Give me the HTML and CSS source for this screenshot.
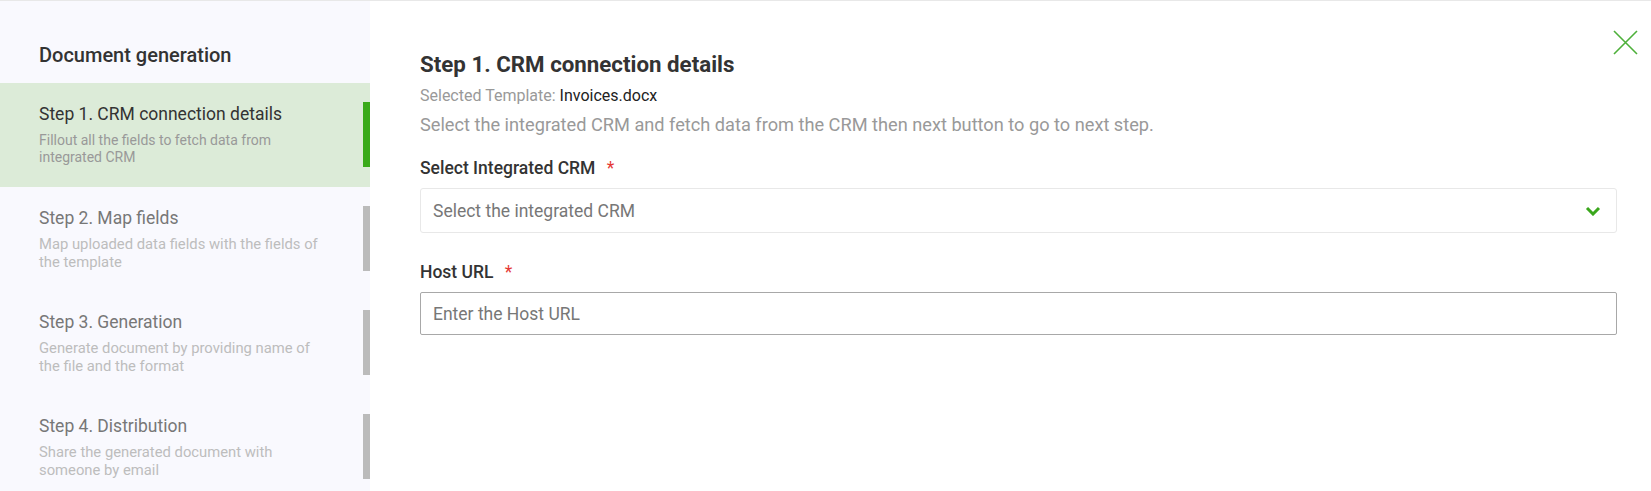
FILE: index.html
```html
<!DOCTYPE html>
<html lang="en">
<head>
<meta charset="utf-8">
<title>Document generation</title>
<link rel="stylesheet" href="styles.css">
</head>
<body>
<div class="page">
  <aside class="sidebar">
    <h2 class="side-title">Document generation</h2>
    <ul class="steps">
      <li class="step active">
        <div class="step-title">Step 1. CRM connection details</div>
        <div class="step-desc">Fillout all the fields to fetch data from integrated CRM</div>
        <span class="step-bar"></span>
      </li>
      <li class="step">
        <div class="step-title">Step 2. Map fields</div>
        <div class="step-desc">Map uploaded data fields with the fields of the template</div>
        <span class="step-bar"></span>
      </li>
      <li class="step">
        <div class="step-title">Step 3. Generation</div>
        <div class="step-desc">Generate document by providing name of the file and the format</div>
        <span class="step-bar"></span>
      </li>
      <li class="step">
        <div class="step-title">Step 4. Distribution</div>
        <div class="step-desc">Share the generated document with someone by email</div>
        <span class="step-bar"></span>
      </li>
    </ul>
  </aside>
  <main class="main">
    <button class="close" aria-label="Close">
      <svg width="25" height="25" viewBox="0 0 25 25"><path d="M1 1 L24 24 M24 1 L1 24" stroke="#4db03a" stroke-width="1.6" fill="none"/></svg>
    </button>
    <h1 class="main-title">Step 1. CRM connection details</h1>
    <div class="template">Selected Template: <span class="template-name">Invoices.docx</span></div>
    <p class="intro">Select the integrated CRM and fetch data from the CRM then next button to go to next step.</p>
    <label class="field-label">Select Integrated CRM <span class="req">*</span></label>
    <div class="select">
      <span class="placeholder">Select the integrated CRM</span>
      <svg class="chevron" width="16" height="10" viewBox="0 0 16 10"><path d="M2 2 L8 8 L14 2" stroke="#3aa71c" stroke-width="3" fill="none"/></svg>
    </div>
    <label class="field-label host-label">Host URL <span class="req">*</span></label>
    <div class="input"><span class="placeholder">Enter the Host URL</span></div>
  </main>
</div>
</body>
</html>
```

FILE: styles.css
```css
* { box-sizing: border-box; }
html, body { margin: 0; padding: 0; }
body {
  font-family: Roboto, "Liberation Sans", Arial, sans-serif;
  background: #fff;
  height: 491px;
  overflow: hidden;
}
.page {
  display: flex;
  height: 491px;
  border-top: 1px solid #e8e8e8;
}
.sidebar {
  width: 370px;
  flex: none;
  background: #f9f9fe;
  padding-top: 42px;
}
.side-title {
  margin: 0 0 16px 39px;
  font-size: 20px;
  line-height: 24px;
  font-weight: 500;
  color: #333;
}
.steps { list-style: none; margin: 0; padding: 0; }
.step {
  position: relative;
  height: 104px;
  padding: 20px 44px 0 39px;
}
.step.active { background: #dcebd8; }
.step-title {
  font-size: 17.5px;
  line-height: 22px;
  color: #777;
}
.step.active .step-title { color: #333; }
.step-desc {
  margin-top: 6px;
  font-size: 14.8px;
  line-height: 18px;
  color: #bdbdbd;
}
.step.active .step-desc {
  margin-top: 7px;
  font-size: 14px;
  line-height: 17px;
  color: #999;
}
.step-bar {
  position: absolute;
  right: 0;
  top: 19px;
  width: 7px;
  height: 65px;
  background: #bbbbbb;
}
.step.active .step-bar { background: #3aaa1a; }
.main {
  position: relative;
  flex: 1;
  padding: 50px 34px 0 50px;
}
.close {
  position: absolute;
  top: 29px;
  right: 13px;
  width: 25px;
  height: 25px;
  padding: 0;
  border: 0;
  background: none;
}
.close svg { display: block; }
.main-title {
  margin: 0;
  font-size: 22.3px;
  line-height: 26px;
  font-weight: 700;
  color: #333;
}
.template {
  margin-top: 9px;
  font-size: 16px;
  line-height: 20px;
  color: #999;
}
.template-name { color: #222; }
.intro {
  margin: 8px 0 0;
  font-size: 18.2px;
  line-height: 22px;
  color: #999;
}
.field-label {
  display: block;
  margin-top: 21px;
  font-size: 17.5px;
  line-height: 22px;
  font-weight: 500;
  color: #333;
}
.host-label { margin-top: 28px; }
.req { color: #e53935; margin-left: 7px; font-weight: 400; }
.select {
  margin-top: 9px;
  height: 45px;
  border: 1px solid #e8e8e8;
  border-radius: 3px;
  display: flex;
  align-items: center;
  justify-content: space-between;
  padding: 0 15px 0 12px;
}
.placeholder {
  font-size: 17.5px;
  color: #777;
}
.chevron { display: block; }
.input {
  margin-top: 9px;
  height: 43px;
  border: 1px solid #a8a8a8;
  border-radius: 2px;
  display: flex;
  align-items: center;
  padding: 0 12px;
}
```
